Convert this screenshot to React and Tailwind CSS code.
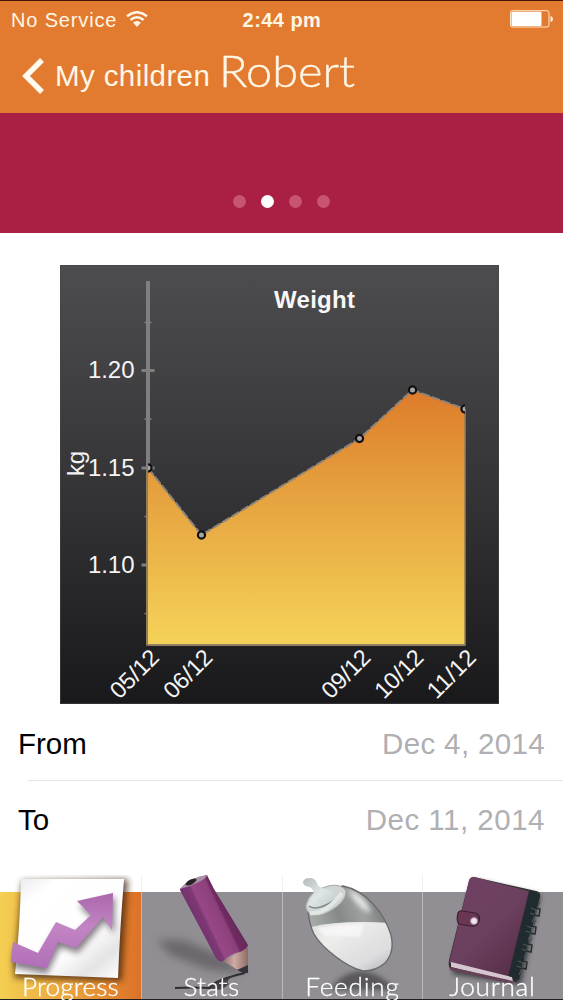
import React from "react";

const yTicks = [
  { y: 57.5 },
  { y: 105.5, label: "1.20" },
  { y: 154 },
  { y: 203, label: "1.15" },
  { y: 251.5 },
  { y: 300, label: "1.10" },
  { y: 348.5 },
];

const points = [
  { x: 88, y: 203, label: "05/12" },
  { x: 141.5, y: 270, label: "06/12" },
  { x: 299.5, y: 173.5, label: "09/12" },
  { x: 352.5, y: 125, label: "10/12" },
  { x: 405, y: 144, label: "11/12" },
];

const line = points.map((p) => `${p.x},${p.y}`).join(" ");

function WeightChart() {
  return (
    <svg width="439" height="439" viewBox="0 0 439 439" fontFamily="'Liberation Sans', Arial, sans-serif">
      <defs>
        <linearGradient id="panel" x1="0" y1="0" x2="0" y2="1">
          <stop offset="0" stopColor="#4d4c4e" />
          <stop offset="0.5" stopColor="#353436" />
          <stop offset="1" stopColor="#19181a" />
        </linearGradient>
        <linearGradient id="area" gradientUnits="userSpaceOnUse" x1="0" y1="125" x2="0" y2="379">
          <stop offset="0" stopColor="#de7b2b" />
          <stop offset="0.4" stopColor="#e5a13e" />
          <stop offset="1" stopColor="#f5d259" />
        </linearGradient>
        <clipPath id="plot">
          <rect x="88" y="16" width="317" height="364" />
        </clipPath>
      </defs>
      <rect width="439" height="439" fill="url(#panel)" />
      <rect x="0.5" y="0.5" width="438" height="438" fill="none" stroke="#454446" strokeOpacity="0.6" />
      <text x="254.5" y="42.5" textAnchor="middle" fill="#f7f7f7" fontSize="24" fontWeight="700" textLength="81">Weight</text>
      <rect x="86" y="16" width="4" height="364" fill="#7f7f80" />
      {yTicks.map((t) => (
        <rect key={t.y} x={t.label ? 81.5 : 84.5} y={t.y - (t.label ? 1.5 : 0.75)} width={t.label ? 13 : 7} height={t.label ? 3 : 1.5} fill="#7f7f80" />
      ))}
      <polygon points={`88,379 ${line} 405,379`} fill="url(#area)" />
      <polyline points={line} fill="none" stroke="#8b857b" strokeWidth="2" strokeDasharray="9 2" />
      <path d="M87 204V380H405V144" fill="none" stroke="#958054" strokeWidth="1.5" />
      <path d="M88 380H405" stroke="#8f8061" strokeWidth="2" />
      <g clipPath="url(#plot)">
        {points.map((p) => (
          <circle key={p.x} cx={p.x} cy={p.y} r="3.6" fill="#a8a5a2" stroke="#121214" strokeWidth="2.2" />
        ))}
      </g>
      {yTicks.filter((t) => t.label).map((t) => (
        <text key={t.label} x="28" y={t.y + 7.7} fill="#f4f4f4" fontSize="24" textLength="46.5">{t.label}</text>
      ))}
      <text transform="translate(24 211) rotate(-90)" fill="#f4f4f4" fontSize="24" textLength="25">kg</text>
      {points.map((p) => (
        <text key={p.label} transform={`translate(${p.x + 12.5} 394) rotate(-45)`} textAnchor="end" fill="#f4f4f4" fontSize="23.5" textLength="58">{p.label}</text>
      ))}
    </svg>
  );
}

function ProgressIcon() {
  return (
    <svg className="block" width="141" height="125" viewBox="0 0 141 125">
      <defs>
        <linearGradient id="paper" x1="0" y1="0" x2="0.9" y2="1">
          <stop offset="0" stopColor="#e9e9eb" />
          <stop offset="0.2" stopColor="#ffffff" />
          <stop offset="0.65" stopColor="#fefefe" />
          <stop offset="0.85" stopColor="#e4e4e4" />
          <stop offset="1" stopColor="#fafafa" />
        </linearGradient>
        <linearGradient id="arrow" x1="0" y1="0" x2="0" y2="1">
          <stop offset="0" stopColor="#ab68aa" />
          <stop offset="0.45" stopColor="#c184c4" />
          <stop offset="1" stopColor="#b26fb8" />
        </linearGradient>
        <filter id="soft" x="-30%" y="-30%" width="160%" height="160%">
          <feGaussianBlur stdDeviation="3" />
        </filter>
      </defs>
      <path d="M22 6L128 4L122 106L14 103Z" fill="#3d2410" opacity="0.75" filter="url(#soft)" />
      <path d="M21 4L124 4Q120 52 118 103L15 99Q20 52 21 4Z" fill="url(#paper)" />
      <path d="M14 73L39 84L57 53L77 60L93 44L79 31L115 22L114 59L105 46L78 78L60 72L47 99L13 92Z" fill="#51454f" opacity="0.7" filter="url(#soft)" />
      <path d="M13 67L38 78L56 47L75 55L91 40L77 26L113 18L112 55L103 42L76 73L58 67L47 93L11 87Z" fill="url(#arrow)" />
    </svg>
  );
}

function PencilIcon() {
  return (
    <svg className="block" width="141" height="125" viewBox="1 0 141 125">
      <defs>
        <linearGradient id="pencil" gradientUnits="userSpaceOnUse" x1="55" y1="50" x2="91" y2="33">
          <stop offset="0" stopColor="#732f6c" />
          <stop offset="0.28" stopColor="#7e3975" />
          <stop offset="0.34" stopColor="#984786" />
          <stop offset="0.7" stopColor="#8c417b" />
          <stop offset="0.76" stopColor="#712b62" />
          <stop offset="1" stopColor="#642858" />
        </linearGradient>
        <linearGradient id="wood" x1="0" y1="0" x2="1" y2="0">
          <stop offset="0" stopColor="#8f6e72" />
          <stop offset="0.45" stopColor="#cfaaa6" />
          <stop offset="1" stopColor="#8c6d62" />
        </linearGradient>
        <filter id="shade" x="-30%" y="-60%" width="160%" height="220%">
          <feGaussianBlur stdDeviation="4" />
        </filter>
      </defs>
      <path d="M17 65L43 65L84 82L105 99L66 94L30 80Z" fill="#4c484e" opacity="0.55" filter="url(#shade)" />
      <path d="M35 113Q52 112 70 113Q74 105 105 98" fill="none" stroke="#302d30" strokeWidth="2" />
      <path d="M69 112Q78 119 89 109Q84 105 98 99L76 106Z" fill="#37333a" opacity="0.85" />
      <path d="M83 86L108 72L108 96L103 98Z" fill="url(#wood)" />
      <path d="M97 95L108 90L108 98L103 98Z" fill="#373139" />
      <path d="M40 14Q49 3 67 0L74 14L108 70Q107 74 100 77Q91 78 83 86Q80 88 76 83L40 15Z" fill="url(#pencil)" />
      <path d="M40 14Q49 3 67 0Q67 3 59 7Q49 12 40 14Z" fill="#a891a7" />
      <ellipse cx="51" cy="7" rx="6" ry="2.4" transform="rotate(-27 51 7)" fill="#292328" />
    </svg>
  );
}

function BottleIcon() {
  return (
    <svg className="block" width="141" height="125" viewBox="2 0 141 125">
      <defs>
        <linearGradient id="glass" gradientUnits="userSpaceOnUse" x1="35" y1="50" x2="105" y2="25">
          <stop offset="0" stopColor="#a4a9a7" />
          <stop offset="0.35" stopColor="#858a88" />
          <stop offset="0.65" stopColor="#9ea1a0" />
          <stop offset="1" stopColor="#727575" />
        </linearGradient>
        <linearGradient id="milk" x1="0" y1="0" x2="1" y2="1">
          <stop offset="0" stopColor="#dadada" />
          <stop offset="0.3" stopColor="#ededec" />
          <stop offset="0.7" stopColor="#dddcde" />
          <stop offset="1" stopColor="#a5a3a6" />
        </linearGradient>
        <linearGradient id="teat" x1="0" y1="0" x2="1" y2="1">
          <stop offset="0" stopColor="#b5b9ba" />
          <stop offset="0.5" stopColor="#dfe6e8" />
          <stop offset="1" stopColor="#bcc4c6" />
        </linearGradient>
        <clipPath id="body">
          <path d="M28 35Q32 18 63 11C87 16 104 38 111 60Q115 77 105 88Q96 96 83 96C66 92 42 73 34 59Q29 49 28 35Z" />
        </clipPath>
        <filter id="blurred" x="-30%" y="-60%" width="160%" height="220%">
          <feGaussianBlur stdDeviation="2.5" />
        </filter>
        <filter id="slight">
          <feGaussianBlur stdDeviation="1" />
        </filter>
      </defs>
      <path d="M82 96Q101 98 116 115L50 115Q61 97 82 96Z" fill="#434145" opacity="0.7" filter="url(#blurred)" />
      <g clipPath="url(#body)">
        <rect x="20" y="0" width="100" height="100" fill="url(#glass)" />
        <path d="M67 14Q86 21 91 38Q80 36 67 14Z" fill="#f0f1f1" opacity="0.9" filter="url(#blurred)" />
        <path d="M31 52Q59 45 111 48L117 100L25 100Z" fill="url(#milk)" />
        <path d="M37 53Q62 48 84 50L80 62Q58 60 44 61Z" fill="#f8f8f8" opacity="0.8" filter="url(#slight)" />
      </g>
      <path d="M28 35Q32 18 63 11C87 16 104 38 111 60Q115 77 105 88Q96 96 83 96C66 92 42 73 34 59Q29 49 28 35Z" fill="none" stroke="#686b6b" strokeWidth="1.4" />
      <path d="M26 30Q29 16 48 11Q61 8 66 16Q66 27 50 36Q36 44 29 38Q25 34 26 30Z" fill="#d0d5d4" stroke="#a5aaaa" />
      <path d="M28 30Q30 22 34 18Q33 13 29 12Q23 11 23 7Q24 3 30 3Q34 3 36 6Q38 14 49 15Q62 19 52 27Q39 37 31 34Z" fill="url(#teat)" />
      <path d="M29 31Q36 37 55 25" fill="none" stroke="#858b8b" strokeWidth="1.6" />
      <path d="M30 38Q45 40 62 18" fill="none" stroke="#e2e6e5" strokeWidth="4" />
    </svg>
  );
}

function JournalIcon() {
  return (
    <svg className="block" width="141" height="125" viewBox="3 0 141 125">
      <defs>
        <linearGradient id="cover" x1="0" y1="0" x2="0.8" y2="1">
          <stop offset="0" stopColor="#714064" />
          <stop offset="0.55" stopColor="#6c405f" />
          <stop offset="1" stopColor="#572e49" />
        </linearGradient>
        <filter id="bookshade" x="-20%" y="-20%" width="140%" height="140%">
          <feGaussianBlur stdDeviation="2.5" />
        </filter>
      </defs>
      <path d="M53 4L122 20L102 110L33 99Z" fill="#333036" opacity="0.8" filter="url(#bookshade)" />
      <path d="M55 2L117 16Q122 17 121 22L98 107L31 94Q29 90 30 85L50 6Q51 2 55 2Z" fill="#2c2d31" />
      <path d="M55 2L110 16L89 101L30 88L50 6Q51 2 55 2Z" fill="url(#cover)" />
      <path d="M32 87L93 102L94 107L32 92Z" fill="#d5c6cf" />
      <path d="M31 92L94 106L93 109L31 95Z" fill="#664158" />
      <path d="M111 16L121 20L100 105L90 101Z" fill="#202b30" />
      {[[117, 35], [113, 53], [109, 71], [104, 88]].map(([x, y]) => (
        <g key={y} transform={`translate(${x} ${y})`} fill="none" stroke="#4b5357" strokeWidth="1.2">
          <path d="M-5-2L0 0L-1 5L-6 3M0 0L4-8M-1 5L-4 12" />
          <path d="M0-2L4-1L3 6L-2 5" stroke="#292d30" strokeWidth="1.5" />
        </g>
      ))}
      <path d="M39 38Q40 35 44 36L56 38Q62 40 60 46Q58 52 51 51L40 49Q37 47 39 38Z" fill="#693653" stroke="#3a2030" strokeWidth="1.2" />
      <circle cx="55" cy="46" r="3.5" fill="#eee5ed" stroke="#a885a0" />
    </svg>
  );
}

const tabs = [
  { name: "Progress", Icon: ProgressIcon, text: "tracking-[0.1px]", active: true },
  { name: "Stats", Icon: PencilIcon, text: "tracking-[0.1px]" },
  { name: "Feeding", Icon: BottleIcon, text: "tracking-[0.7px]" },
  { name: "Journal", Icon: JournalIcon, text: "tracking-[0.6px]" },
];

function DateRow({ label, value, className, valueClass }) {
  return (
    <div className={`flex items-center justify-between pr-[18px] pl-[18px] text-[29.5px] ${className}`}>
      <span className="text-black">{label}</span>
      <span className={`text-[#b0afb3] ${valueClass}`}>{value}</span>
    </div>
  );
}

export default function App() {
  return (
    <div className="flex h-[1000px] w-[563px] flex-col overflow-hidden bg-white font-['Liberation_Sans',Arial,sans-serif]">
      <header className="flex h-[113px] shrink-0 flex-col border-t border-[#481306] bg-[#e27b2f] text-[#fff6e6]">
        <div className="grid h-[38px] grid-cols-3 items-center pr-[10px] pl-[11px] text-[20px] leading-[38px]">
          <div className="flex items-center gap-[9px]">
            <span className="whitespace-nowrap tracking-[0.85px]">No Service</span>
            <svg className="-mt-[3px]" width="22" height="16" viewBox="0 0 22 16" fill="none" stroke="currentColor" strokeWidth="2.4">
              <path d="M1 5.2Q11-2.8 21 5.2M4.5 9Q11 3.6 17.5 9" />
              <path d="M7 11.5Q11 8.5 15 11.5L11 16Z" fill="currentColor" stroke="none" />
            </svg>
          </div>
          <span className="text-center font-bold tracking-[0.45px]">2:44 pm</span>
          <svg className="-mt-[2px] justify-self-end" width="43" height="18" viewBox="0 0 43 18">
            <rect x="0.5" y="0.7" width="38.5" height="16.3" rx="2" fill="none" stroke="#ffe9cc" />
            <rect x="1.5" y="1.7" width="30" height="14.3" rx="1" fill="#fff" />
            <path d="M40.5 6Q43 6.5 43 9T40.5 12Z" fill="#fff1df" />
          </svg>
        </div>
        <div className="flex h-[74px] items-center pl-[22px]">
          <svg className="-mt-[1px]" width="23" height="36" viewBox="0 0 23 36" fill="none" stroke="#fffaf0" strokeWidth="5.5">
            <path d="M20 2L4 18L20 34" />
          </svg>
          <span className="-mt-[1px] ml-[10px] whitespace-nowrap text-[29.5px] leading-[74px] tracking-[0.4px]">My children</span>
          <h1 className="-mt-[11px] ml-[9px] origin-left scale-x-[1.09] whitespace-nowrap font-['Lato',sans-serif] text-[43px] font-light leading-[74px] [-webkit-text-stroke:0.4px_#fff6e6]">Robert</h1>
        </div>
      </header>

      <div className="flex h-[120px] shrink-0 items-end justify-center gap-[15px] bg-[#aa1f44] pb-[25px]">
        <span className="size-[13px] rounded-full bg-[#c85570]" />
        <span className="size-[13px] rounded-full bg-white" />
        <span className="size-[13px] rounded-full bg-[#c85570]" />
        <span className="size-[13px] rounded-full bg-[#c85570]" />
      </div>

      <main className="flex h-[642px] shrink-0 flex-col pt-[32px]">
        <div className="ml-[60px] size-[439px] shrink-0">
          <WeightChart />
        </div>
        <DateRow label="From" value="Dec 4, 2014" className="h-[76px] pt-[4px]" valueClass="tracking-[0.35px]" />
        <hr className="ml-[28px] border-[#e6e5e8]" />
        <DateRow label="To" value="Dec 11, 2014" className="h-[79px]" valueClass="tracking-[0.5px]" />
      </main>

      <nav className="grid h-[125px] shrink-0 grid-cols-4 border-b border-[#211f20]">
        {tabs.map(({ name, Icon, text, active }) => (
          <div
            key={name}
            className={`relative ${active ? "bg-[linear-gradient(90deg,#f4cf52,#e99e3b_55%,#dc7128)]" : "bg-[#918f93]"}`}
          >
            <div className="h-[17px] bg-white" />
            {!active && <div className="absolute inset-y-0 left-0 w-px bg-[linear-gradient(#f0f0f0_17px,#b9b7ba_17px)]" />}
            <div className="relative -mt-[17px] h-[124px] overflow-hidden">
              <Icon />
            </div>
            <span className={`absolute inset-x-0 top-[99px] scale-x-[1.07] text-center font-['Lato',sans-serif] text-[24.5px] font-light leading-[25px] text-white [-webkit-text-stroke:0.3px_white] ${text}`}>
              {name}
            </span>
          </div>
        ))}
      </nav>
    </div>
  );
}
